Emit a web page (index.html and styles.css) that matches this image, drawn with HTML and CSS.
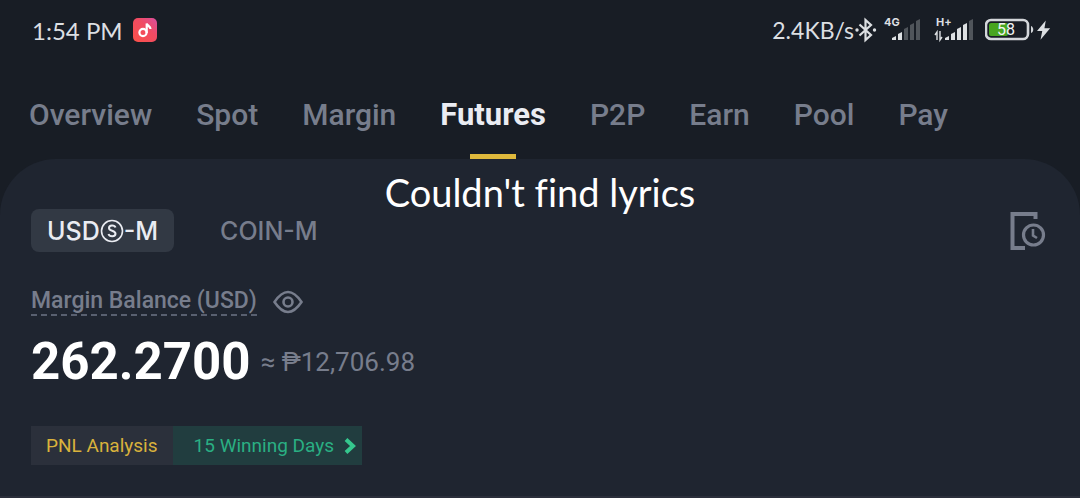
FILE: index.html
```html
<!DOCTYPE html>
<html lang="en">
<head>
    <meta charset="UTF-8">
    <meta name="viewport" content="width=device-width, initial-scale=1.0">
    <title>Futures Wallet</title>
    <link rel="stylesheet" href="styles.css">
</head>
<body>
    <header class="status-bar">
        <span>1:54 PM</span>
        <svg class="music-icon" width="24" height="24" viewBox="0 0 24 24">
            <defs>
                <linearGradient id="musicBg" x1="0" y1="1" x2="1" y2="0">
                    <stop offset="0" stop-color="#fb5148"/>
                    <stop offset="0.6" stop-color="#f04b64"/>
                    <stop offset="1" stop-color="#d94fa0"/>
                </linearGradient>
            </defs>
            <rect width="24" height="24" rx="5" fill="url(#musicBg)"/>
            <circle cx="10" cy="14.5" r="3.6" fill="none" stroke="#fff" stroke-width="2.2"/>
            <path d="M13.7 15V5.5C14 8 17.5 7.6 17.5 11" fill="none" stroke="#fff" stroke-width="2.2"/>
        </svg>

        <span class="net-speed">2.4KB/s</span>
        <svg width="24" height="26" viewBox="0 0 24 26">
            <path d="M5.5 7.5L17 18L11.5 23V3L17 8L5.5 18.5" fill="none" stroke="#dcdfe2" stroke-width="2.2"/>
            <circle cx="3" cy="13" r="1.7" fill="#dcdfe2"/>
            <circle cx="20.5" cy="13" r="1.7" fill="#dcdfe2"/>
        </svg>
        <svg class="signal" width="40" height="32" viewBox="0 0 40 32">
            <text x="2" y="12">4G</text>
            <path d="M10 26v-2l4-2v4zM16 26v-6l4-2v8z" fill="#dcdfe2"/>
            <path d="M22 26V15l4-2v13zM28 26V11l4-2v17zM34 26V7l4-2v21z" fill="#50555b"/>
        </svg>
        <svg class="signal signal-h" width="42" height="32" viewBox="0 0 42 32">
            <text x="3" y="12">H+</text>
            <path d="M4 26v-8l-2 3M7 17v9l2-3" fill="none" stroke="#dcdfe2" stroke-width="1.4"/>
            <path d="M12 26v-2l4-2v4zM18 26v-6l4-2v8zM24 26V15l4-2v13zM30 26V11l4-2v17z" fill="#dcdfe2"/>
            <path d="M36 26V7l4-2v21z" fill="#50555b"/>
        </svg>
        <svg class="battery" width="50" height="24" viewBox="0 0 50 24">
            <rect x="1" y="2" width="42" height="19" rx="5" fill="none" stroke="#d3d6da" stroke-width="2.6"/>
            <rect x="4" y="5" width="19" height="13" rx="2" fill="#47a51f"/>
            <path d="M46 8c3 1 3 6 0 7z" fill="#d3d6da"/>
            <text x="12" y="17">58</text>
        </svg>
        <svg width="14" height="20" viewBox="0 0 16 22">
            <path d="M10 0L0 12h6L4 22L15 9H8.500z" fill="#dcdfe2"/>
        </svg>
    </header>

    <nav class="main-nav">
        <a href="#">Overview</a>
        <a href="#">Spot</a>
        <a href="#">Margin</a>
        <a href="#" class="active">Futures</a>
        <a href="#">P2P</a>
        <a href="#">Earn</a>
        <a href="#">Pool</a>
        <a href="#">Pay</a>
    </nav>

    <div class="lyrics">Couldn't find lyrics</div>

    <main class="panel">
        <div class="tabs">
            <button class="tab selected">USD<svg width="24" height="24" viewBox="0 0 24 24" fill="none" stroke="currentColor">
                <circle cx="12" cy="12" r="10.500" stroke-width="1.6"/>
                <path d="M15.500 8.500C14.500 5.800 9 5.800 9 9C9 12.500 15.500 11 15.500 14.800C15.500 18 9.500 18.200 8.500 15" stroke-width="2"/>
            </svg>-M</button>
            <button class="tab">COIN-M</button>
            <button class="history" aria-label="History">
                <svg width="36" height="40" viewBox="0 0 36 40" fill="none" stroke="#777d8c">
                    <path d="M25.500 8V3H2.500V37H15" stroke-width="4"/>
                    <circle cx="23.500" cy="24" r="10" stroke-width="3.2"/>
                    <path d="M23 18V24.500L27 27" stroke-width="2.6"/>
                </svg>
            </button>
        </div>

        <div class="balance-label">
            <span>Margin Balance (USD)</span>
            <button aria-label="Hide balance">
                <svg width="30" height="24" viewBox="0 0 30 24" fill="none" stroke="#777d8c">
                    <path d="M1.500 12Q15 -8 28.500 12Q15 32 1.500 12Z" stroke-width="2.600"/>
                    <circle cx="15" cy="12" r="4.500" stroke-width="2.600"/>
                </svg>
            </button>
        </div>

        <div class="balance">
            <strong>262.2700</strong>
            <span>≈ ₱12,706.98</span>
        </div>

        <a href="#" class="pnl">
            <span class="pnl-title">PNL Analysis</span>
            <span class="pnl-days">15 Winning Days
                <svg width="12" height="16" viewBox="0 0 12 16">
                    <path d="M2 1.500L9 8L2 14.500" fill="none" stroke="#35c88e" stroke-width="4"/>
                </svg>
            </span>
        </a>
    </main>
</body>
</html>
```
FILE: styles.css
```css
body {
    margin: 0;
    background-color: #181d25;
    color: #777d8c;
    font-family: Roboto, "Liberation Sans", sans-serif;
    position: relative;
}

a {
    color: inherit;
    text-decoration: none;
}

button {
    padding: 0;
    border: none;
    background: none;
    color: inherit;
    font: inherit;
    cursor: pointer;
}

svg {
    display: block;
    flex: none;
}

.status-bar {
    display: flex;
    align-items: center;
    height: 60px;
    padding: 0 29px 0 32px;
    color: #dcdfe2;
    font-family: Lato, sans-serif;
    font-size: 24px;
}

.music-icon {
    margin-left: 10px;
}

.net-speed {
    margin-left: auto;
    font-size: 23px;
}

.signal {
    margin-left: 4px;
}

.signal text {
    font: bold 11px Inter, sans-serif;
    fill: #dcdfe2;
}

.signal-h {
    margin-left: 11px;
}

.battery {
    margin-left: 10px;
    margin-right: 2px;
}

.battery text {
    font: 16px Roboto, sans-serif;
    fill: #f2f4f5;
}

.main-nav {
    display: flex;
    gap: 44px;
    height: 99px;
    padding: 0 29px;
    font-size: 30px;
    font-weight: 500;
    line-height: 110px;
}

.main-nav .active {
    position: relative;
    color: #eaecf2;
    font-size: 31px;
    font-weight: 700;
}

.main-nav .active::after {
    content: "";
    position: absolute;
    left: 50%;
    top: 94px;
    width: 46px;
    height: 5px;
    margin-left: -23px;
    background-color: #dfb93c;
}

.lyrics {
    position: absolute;
    top: 168px;
    left: 0;
    right: 0;
    color: #fff;
    font-family: Lato, sans-serif;
    font-size: 38px;
    font-variant-ligatures: none;
    line-height: 48px;
    text-align: center;
}

.panel {
    padding: 50px 34px 31px 31px;
    border-bottom: 2px solid #2b2f3b;
    border-radius: 56px 56px 0 0;
    background-color: #1f2530;
}

.tabs {
    display: flex;
    align-items: center;
    gap: 30px;
    font-family: Inter, sans-serif;
    font-size: 25px;
    font-weight: 500;
}

.tab {
    display: flex;
    align-items: center;
    height: 43px;
    padding: 0 16px;
}

.tab.selected {
    border-radius: 8px;
    background-color: #323944;
    color: #eaecf2;
}

.history {
    margin-left: auto;
}

.balance-label {
    display: flex;
    align-items: center;
    gap: 16px;
    margin-top: 36px;
    font-size: 23px;
    font-weight: 500;
    line-height: 26px;
}

.balance-label span {
    border-bottom: 2px dashed #596070;
}

.balance {
    display: flex;
    align-items: center;
    gap: 10px;
    margin-top: 16px;
    font-size: 26px;
    line-height: 60px;
}

.balance strong {
    color: #fff;
    font-size: 51px;
}

.pnl {
    display: inline-flex;
    margin-top: 34px;
    font-size: 19px;
    line-height: 39px;
    vertical-align: top;
}

.pnl-title {
    padding: 0 15px;
    background-color: #2b303b;
    color: #d9b23c;
}

.pnl-days {
    display: flex;
    align-items: center;
    gap: 10px;
    padding: 0 6px 0 21px;
    background-color: #213d3f;
    color: #2aaf83;
}
```
